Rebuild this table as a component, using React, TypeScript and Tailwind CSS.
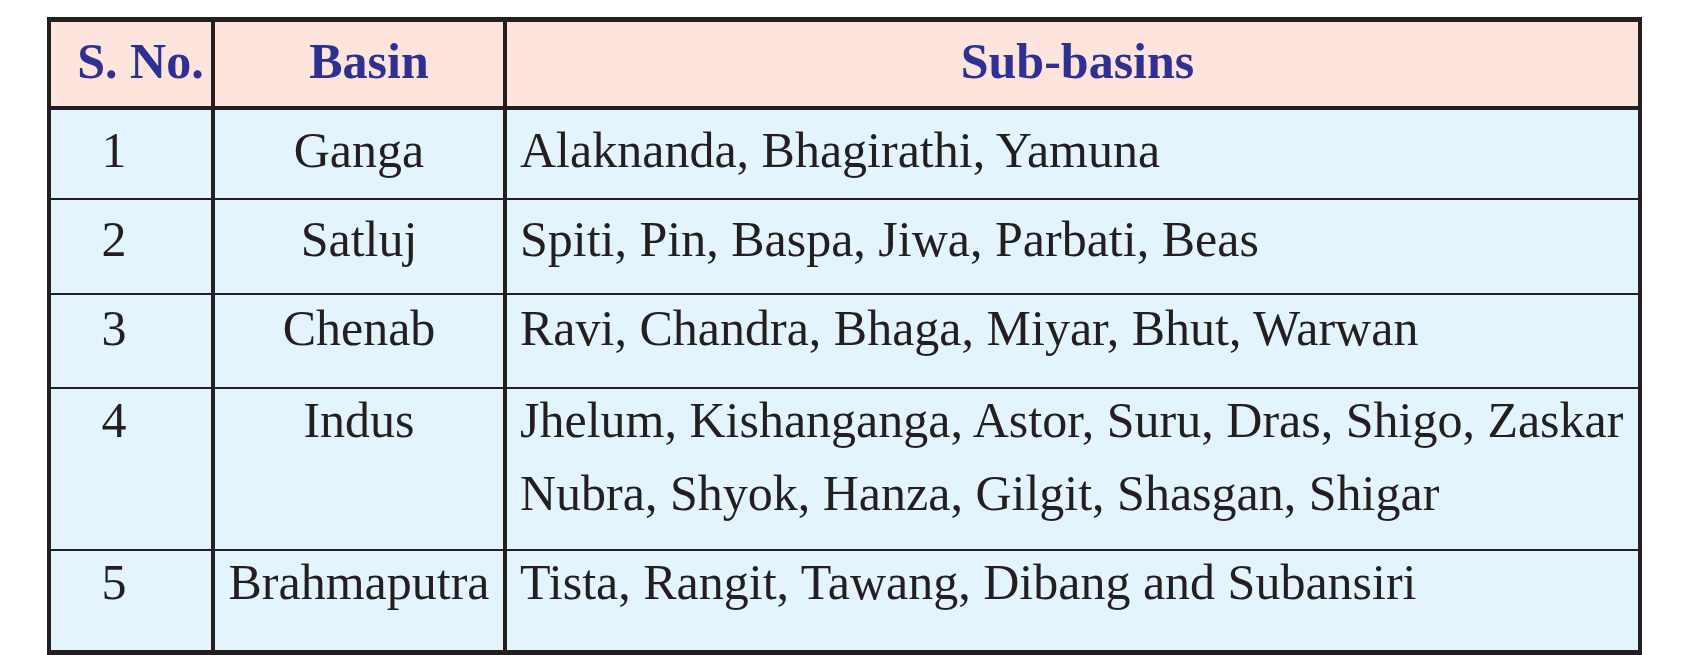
import React from 'react'

type Row = {
    no: string
    basin: string
    subs: string[]
    rowClass: string
    padClass: string
}

const rows: Row[] = [
    { no: "1", basin: "Ganga", subs: ["Alaknanda, Bhagirathi, Yamuna"], rowClass: "h-[90px] border-b-2", padClass: "pt-[15px]" },
    { no: "2", basin: "Satluj", subs: ["Spiti, Pin, Baspa, Jiwa, Parbati, Beas"], rowClass: "h-[95px] border-b-2", padClass: "pt-[14px]" },
    { no: "3", basin: "Chenab", subs: ["Ravi, Chandra, Bhaga, Miyar, Bhut, Warwan"], rowClass: "h-[94px] border-b-2", padClass: "pt-[8px]" },
    {
        no: "4",
        basin: "Indus",
        subs: ["Jhelum, Kishanganga, Astor, Suru, Dras, Shigo, Zaskar", "Nubra, Shyok, Hanza, Gilgit, Shasgan, Shigar"],
        rowClass: "h-[162px] border-b-2",
        padClass: "pt-[6px]",
    },
    { no: "5", basin: "Brahmaputra", subs: ["Tista, Rangit, Tawang, Dibang and Subansiri"], rowClass: "h-[99px]", padClass: "pt-[6px]" },
]

const App = () => {
    return (
        <div className="min-h-screen bg-white pt-[17px] pl-[47px] font-['Liberation_Serif','Times_New_Roman',serif] text-[50px] leading-[50px]">
            <div className="w-[1595px] border-x-4 border-t-[5px] border-b-[5px] border-[#231f20]">
                {/* header */}
                <div className="flex h-[88px] border-b-4 border-[#231f20] bg-[#fde4dc] font-bold text-[#2e3192]">
                    <div className="w-[164px] shrink-0 border-r-4 border-[#231f20] pt-[14px] pl-[19px] text-center whitespace-nowrap">
                        S. No.
                    </div>
                    <div className="w-[292px] shrink-0 border-r-4 border-[#231f20] pt-[14px] pl-[20px] text-center">
                        Basin
                    </div>
                    <div className="flex-1 pt-[14px] pl-[10px] text-center">
                        Sub-basins
                    </div>
                </div>

                {rows.map((row) => (
                    <div key={row.no} className={`flex border-[#231f20] bg-[#e4f4fc] text-[#231f20] ${row.rowClass}`}>
                        <div className={`w-[164px] shrink-0 border-r-4 border-[#231f20] pr-[34px] text-center ${row.padClass}`}>
                            {row.no}
                        </div>
                        <div className={`w-[292px] shrink-0 border-r-4 border-[#231f20] text-center whitespace-nowrap ${row.padClass}`}>
                            {row.basin}
                        </div>
                        <div className={`flex flex-1 flex-col gap-[23px] pl-[13px] ${row.padClass}`}>
                            {row.subs.map((line) => (
                                <div key={line} className="whitespace-nowrap">
                                    {line}
                                </div>
                            ))}
                        </div>
                    </div>
                ))}
            </div>
        </div>
    )
}

export default App
